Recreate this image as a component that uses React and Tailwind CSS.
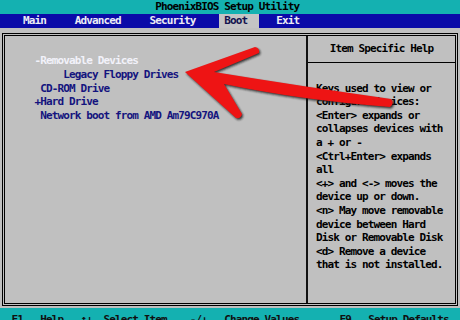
const HELP = [
  'Keys used to view or',
  'configure devices:',
  '<Enter> expands or',
  'collapses devices with',
  'a + or -',
  '<Ctrl+Enter> expands',
  'all',
  '<+> and <-> moves the',
  'device up or down.',
  '<n> May move removable',
  'device between Hard',
  'Disk or Removable Disk',
  '<d> Remove a device',
  'that is not installed.',
]

function Arrow() {
  const d =
    'M185,72 L255,47 Q260,48 259,53 L214,72 Q300,86 391,99 Q395,103 390,107 Q300,100 224,84 L242,114 Q241,119 236,118 Z'
  return (
    <svg className="absolute inset-0 pointer-events-none" width="460" height="320" viewBox="0 0 460 320">
      <defs>
        <filter id="blur" x="-10%" y="-10%" width="120%" height="120%">
          <feGaussianBlur stdDeviation="0.8" />
        </filter>
      </defs>
      <path d={d} fill="#1a1a1a" opacity="0.85" transform="translate(1.2,1.6)" filter="url(#blur)" />
      <path d={d} fill="#ee1414" />
    </svg>
  )
}

export default function App() {
  return (
    <div className="relative w-[460px] h-[320px] overflow-hidden bg-[#c0c0c0] font-['DejaVu_Sans_Mono',monospace] font-bold text-[11px] tracking-[-0.87px]">
      {/* title */}
      <div className="h-[13.5px] leading-[13.5px] bg-[#14b1b1] text-black whitespace-pre">
        {'                           PhoenixBIOS Setup Utility'}
      </div>

      {/* menu */}
      <div className="flex h-[14px] leading-[14px] bg-[#0a0aa8] text-[#ececf4] whitespace-pre">
        <span>{'    Main     Advanced     Security    '}</span>
        <span className="bg-[#c4c4c4] text-[#12124e]">{' Boot  '}</span>
        <span>{'   Exit'}</span>
      </div>

      {/* main box */}
      <div className="pt-[5.5px] pb-[1.5px] px-[2px]">
        <div className="h-[273px] border-[3px] border-double border-black flex">
          <div className="w-[301px] pt-[18.4px] pl-[29.5px] leading-[13.6px] whitespace-pre text-[#14147e]">
            <div className="text-[#f2f2fa]">-Removable Devices</div>
            <div>{'     Legacy Floppy Drives'}</div>
            <div>{' CD-ROM Drive'}</div>
            <div>+Hard Drive</div>
            <div>{' Network boot from AMD Am79C970A'}</div>
          </div>
          <div className="w-[2px] bg-[#111]" />
          <div className="flex-1 flex flex-col text-black">
            <div className="h-[25.5px] flex items-center justify-center">Item Specific Help</div>
            <div className="h-px bg-black" />
            <div className="pt-[19.1px] pl-[8px] leading-[13.6px] whitespace-pre">
              {HELP.map((l, i) => (
                <div key={i}>{l}</div>
              ))}
            </div>
          </div>
        </div>
      </div>

      {/* footer */}
      <div className="h-[20px] pt-[5.5px] leading-[13.6px] bg-[#14b1b1] text-[#101010] whitespace-pre">
        {'  F1   Help   ↑↓  Select Item    -/+   Change Values       F9   Setup Defaults'}
      </div>

      <Arrow />
    </div>
  )
}
